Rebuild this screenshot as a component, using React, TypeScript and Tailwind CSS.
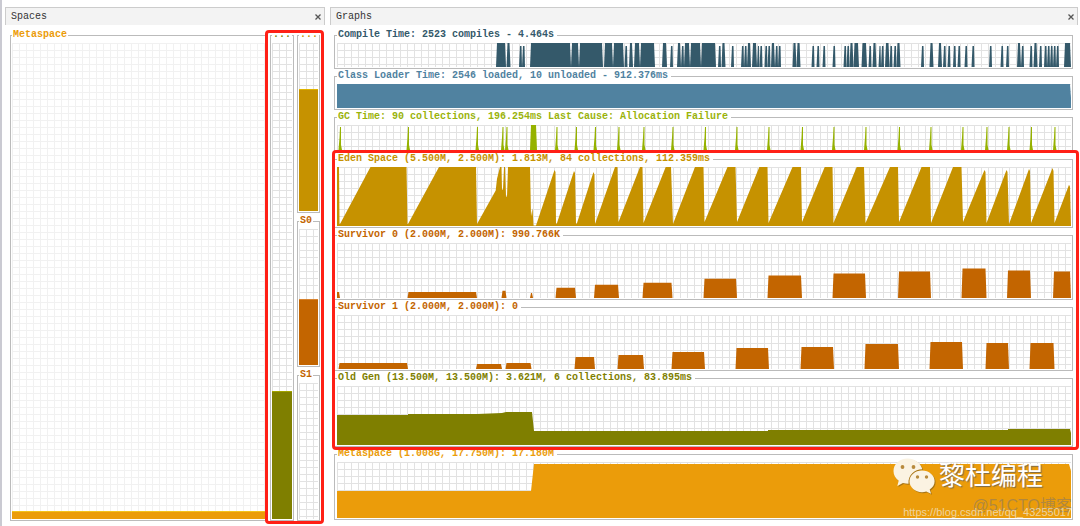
import { clsx } from "clsx"

type Point = [x: number, y: number]

type Shape = Point[]

type Graph = {
  id: string
  title: string
  textClass: string
  fillClass: string
  weight: number
  height: number
  shapes: Shape[]
}

type Gauge = {
  id: string
  label: string
  textClass: string
  fillClass: string
  weight: number
  percent: number
}

const PLOT_WIDTH = 734

// Vertical border and padding of a panel, which flex-grow does not share out
const PANEL_CHROME = 5

// Narrow samples never reach the top of the plot, wide ones do
const burst = ([left, right]: Point): Shape => {
  if (right - left < 3.3) {
    return [[left, 24], [left + 1, 3], [right - 0.5, 3], [right, 24]]
  }
  return [[left, 24], [left + 1, 0], [right - 1, 0], [right, 24]]
}

const spike = (x: number): Shape => [
  [x - 1.5, 24],
  [x - 0.5, 12],
  [x, 2],
  [x + 1, 2],
  [x + 1, 19],
  [x + 2, 24],
]

const block = ([left, right, top]: [number, number, number]): Shape => [
  [left, 54],
  [left + 1, top],
  [right - 1, top],
  [right, 54],
]

const compileBursts: Point[] = [
  [159, 169], [169.5, 173.5], [182, 185], [185, 188], [193, 234], [234, 242],
  [242, 266], [267, 276], [276, 287], [287.5, 290.5], [292, 296], [297, 303],
  [303, 318], [325, 330], [333, 336], [340, 344], [344, 347], [347, 353],
  [353, 364], [364, 379], [381, 384], [384.5, 388.5], [394, 397], [404, 407],
  [407, 410], [410, 414], [415, 420], [420, 422.5], [422.5, 425.5], [427.5, 430.5],
  [430.5, 433.5], [434, 438], [438, 441], [441, 444], [455.5, 459.5], [459.5, 463.5],
  [474.5, 477.5], [479.5, 482.5], [485.5, 488.5], [495.5, 498.5], [506.5, 509.5], [509.5, 512.5],
  [512.5, 516.5], [516.5, 522], [524.5, 530], [531.5, 534.5], [535.5, 539.5], [541.5, 544],
  [544, 547], [548, 552.5], [552.5, 555.5], [556.5, 559.5], [559.5, 563.5], [584, 587],
  [592.5, 596.5], [601, 605], [606, 609], [610.5, 613.5], [616, 619], [620.5, 623.5],
  [627.5, 630.5], [634.5, 637.5], [652, 655], [663.5, 666.5], [669, 672], [680, 684],
  [684, 687], [692.5, 695.5], [696.5, 700.5], [702, 705], [707, 710], [710, 713],
  [713, 716], [716, 719], [719, 722], [727, 734],
]

const gcSpikes = [
  3, 71, 140, 165.5, 169.5, 219.5, 239, 258, 281.5, 306.5, 335.5, 368, 399.5,
  431.5, 465, 496.5, 528.5, 562, 593.5, 625.5, 649.5, 671.5, 694, 717.5,
]

const eden: Shape = [
  [0, 60], [0, 0], [2, 0], [2.5, 58], [3, 58], [33.5, 0], [69.5, 0], [70.5, 58],
  [71, 58], [102, 0], [139, 0], [140, 58], [158.7, 24], [160, 12], [163, 0], [164.5, 0],
  [165, 23], [166, 23], [167, 0], [168, 0], [169, 30], [170, 30], [171, 0], [193, 0],
  [194, 50], [195.5, 42], [196.5, 59.5], [199, 59.5], [217.5, 3], [218.5, 5], [219, 58],
  [220, 57], [237, 4], [238, 6], [239, 58], [240, 57], [256.5, 5], [257.5, 8], [258, 58],
  [278, 0], [280.5, 0], [281.5, 56], [303, 0], [305.5, 0], [306.5, 57], [328.7, 0],
  [334, 0], [336, 58], [358, 0], [366.5, 0], [367.5, 56], [390.5, 0], [398.5, 0],
  [400, 56], [422.3, 0], [430.5, 0], [431.5, 57], [455.5, 0], [464, 0], [465, 56],
  [487.7, 0], [495.5, 0], [496.5, 57], [519.7, 0], [527, 0], [528.5, 57], [553, 0],
  [561, 0], [562, 56], [584.5, 0], [593, 0], [594, 57], [616, 0], [624.5, 0], [626, 56],
  [647.5, 3], [648.5, 5], [649.5, 57], [669.5, 3], [670.5, 5], [672, 58], [692, 2],
  [693, 4], [694, 57], [715.5, 1], [716.5, 4], [717.5, 57], [732, 18], [733, 20],
  [734, 60],
]

const survivor0: [number, number, number][] = [
  [-2, 3, 48], [70.5, 140, 48], [164.5, 169.5, 47], [193, 196, 49], [218.5, 239, 44],
  [257, 282, 41], [305.5, 335.5, 39], [366.5, 400, 35], [430.5, 465, 32], [495.5, 529, 30],
  [561, 594, 28], [624.5, 649.5, 25], [670, 694, 27], [716, 734, 28],
]

const survivor1: [number, number, number][] = [
  [1.5, 71, 48], [139, 165, 49], [168.5, 194.5, 48], [237.5, 258, 42], [280.5, 307, 40],
  [334.5, 368, 37], [398.5, 432, 33], [463.5, 497, 32], [527.5, 562, 29], [592.5, 626, 27],
  [648.5, 672, 28], [692.5, 717.5, 28],
]

const timeGraphs: Graph[] = [
  {
    id: "compile",
    title: "Compile Time: 2523 compiles - 4.464s",
    textClass: "text-[#34596a]",
    fillClass: "fill-[#34596a]",
    weight: 40,
    height: 24,
    shapes: compileBursts.map(burst),
  },
  {
    id: "class-loader",
    title: "Class Loader Time: 2546 loaded, 10 unloaded - 912.376ms",
    textClass: "text-[#5082a0]",
    fillClass: "fill-[#5082a0]",
    weight: 40,
    height: 24,
    shapes: [[[0, 24], [0, 0], [733, 0], [734, 14], [734, 24]]],
  },
  {
    id: "gc",
    title: "GC Time: 90 collections, 196.254ms Last Cause: Allocation Failure",
    textClass: "text-[#9ab30a]",
    fillClass: "fill-[#96b200]",
    weight: 41,
    height: 24,
    shapes: [
      ...gcSpikes.map(spike),
      [[193, 24], [194, 0], [199, 0], [200, 24]],
    ],
  },
]

const heapGraphs: Graph[] = [
  {
    id: "eden",
    title: "Eden Space (5.500M, 2.500M): 1.813M, 84 collections, 112.359ms",
    textClass: "text-[#c69200]",
    fillClass: "fill-[#c69200]",
    weight: 75,
    height: 60,
    shapes: [eden],
  },
  {
    id: "survivor-0",
    title: "Survivor 0 (2.000M, 2.000M): 990.766K",
    textClass: "text-[#c36500]",
    fillClass: "fill-[#c36500]",
    weight: 71,
    height: 54,
    shapes: survivor0.map(block),
  },
  {
    id: "survivor-1",
    title: "Survivor 1 (2.000M, 2.000M): 0",
    textClass: "text-[#c36500]",
    fillClass: "fill-[#c36500]",
    weight: 70,
    height: 54,
    shapes: survivor1.map(block),
  },
  {
    id: "old-gen",
    title: "Old Gen (13.500M, 13.500M): 3.621M, 6 collections, 83.895ms",
    textClass: "text-[#7f7f00]",
    fillClass: "fill-[#7f7f00]",
    weight: 75,
    height: 59,
    shapes: [
      [
        [0, 59], [0, 29], [71, 29], [71, 28], [140, 28], [165, 27], [169, 26],
        [195, 26], [197, 45], [431, 45], [431, 44], [671, 44], [671, 43],
        [733, 43], [734, 47], [734, 59],
      ],
    ],
  },
]

const metaspaceGraph: Graph = {
  id: "metaspace",
  title: "Metaspace (1.008G, 17.750M): 17.180M",
  textClass: "text-[#eb9c0a]",
  fillClass: "fill-[#eb9c0a]",
  weight: 72,
  height: 56,
  shapes: [
    [[0, 56], [0, 29], [194, 29], [197, 2], [732, 2], [734, 9], [734, 56]],
  ],
}

const metaspaceGauge: Gauge = {
  id: "metaspace",
  label: "Metaspace",
  textClass: "text-[#eb9c0a]",
  fillClass: "border-[#f3c31c] bg-[#eb9c0a]",
  weight: 492,
  percent: 1.7,
}

const oldGauge: Gauge = {
  id: "old",
  label: "...",
  textClass: "text-[#7f7f00]",
  fillClass: "border-[#a3a300] bg-[#7f7f00]",
  weight: 492,
  percent: 26.8,
}

const youngGauges: Gauge[] = [
  {
    id: "eden",
    label: "...",
    textClass: "text-[#c69200]",
    fillClass: "border-[#e0b400] bg-[#c69200]",
    weight: 184,
    percent: 72.5,
  },
  {
    id: "s0",
    label: "S0",
    textClass: "text-[#c36500]",
    fillClass: "border-[#d88430] bg-[#c36500]",
    weight: 152,
    percent: 48.5,
  },
  {
    id: "s1",
    label: "S1",
    textClass: "text-[#c36500]",
    fillClass: "bg-[#c36500]",
    weight: 152,
    percent: 0,
  },
]

const gridClass =
  "bg-[linear-gradient(#e2e2e2_1px,transparent_1px),linear-gradient(90deg,#e2e2e2_1px,transparent_1px)] bg-[length:7px_7px]"
const faintGridClass =
  "bg-[linear-gradient(#f1f1f1_1px,transparent_1px),linear-gradient(90deg,#f1f1f1_1px,transparent_1px)] bg-[length:7px_7px]"

const PanelHeader = ({ title }: { title: string }) => (
  <header className="flex h-[18px] shrink-0 items-center justify-between border-x border-t border-[#cccccc] bg-[#f3f3f3] pr-0.5 pl-[5px]">
    <h2 className="text-[10px] leading-4 text-[#333333]">{title}</h2>
    <button type="button" aria-label={`Close ${title}`} className="p-px">
      <svg viewBox="0 0 6 6" className="size-1.5 stroke-[#555555] stroke-[1.3]">
        <path d="M0.5 0.5 5.5 5.5M5.5 0.5 0.5 5.5" />
      </svg>
    </button>
  </header>
)

const GraphPanel = ({ graph }: { graph: Graph }) => (
  <fieldset
    className="flex min-h-0 min-w-0 basis-0 flex-col border border-[#bbbbbb] pt-0.5 pr-px pb-px pl-0.5"
    style={{ flexGrow: graph.weight - PANEL_CHROME }}
  >
    <legend
      className={clsx(
        "pr-[3px] pl-px text-[10px] leading-3 font-bold whitespace-nowrap",
        graph.textClass,
      )}
    >
      {graph.title}
    </legend>
    <svg
      viewBox={`0 0 ${PLOT_WIDTH} ${graph.height}`}
      preserveAspectRatio="none"
      className={clsx("min-h-0 w-full flex-1", gridClass, graph.fillClass)}
      aria-hidden="true"
    >
      {graph.shapes.map((shape, index) => (
        <polygon key={index} points={shape.map((p) => p.join(",")).join(" ")} />
      ))}
    </svg>
  </fieldset>
)

const GaugePanel = ({ gauge, faint }: { gauge: Gauge; faint?: boolean }) => (
  <fieldset
    className="flex min-h-0 w-full min-w-0 basis-0 flex-col border border-[#bbbbbb] px-px pt-0.5 pb-px"
    style={{ flexGrow: gauge.weight - PANEL_CHROME }}
  >
    <legend
      className={clsx(
        "px-px text-[10px] leading-3 font-bold",
        gauge.textClass,
      )}
    >
      {gauge.label}
    </legend>
    <div
      className={clsx(
        "flex min-h-0 flex-1 items-end",
        faint ? faintGridClass : gridClass,
      )}
    >
      {gauge.percent > 0 ? (
        <div
          className={clsx("w-full border-t", gauge.fillClass)}
          style={{ height: `${gauge.percent}%` }}
        />
      ) : null}
    </div>
  </fieldset>
)

const WeChatLogo = () => (
  <svg
    viewBox="0 0 42 36"
    className="h-9 w-[42px] drop-shadow-[1px_1px_0_rgba(120,90,30,0.6)]"
    aria-hidden="true"
  >
    <path
      fill="#fbf3e2"
      d="M14.5 0.5C6.7 0.5 0.5 6 0.5 13c0 4 2 7.4 5.2 9.700L4.300 28l5.600-3c1.800.6 3.600.8 5.600.8C15 17 21.500 11.300 29.300 11.300 27.800 5 21.700 0.500 14.500 0.500Z"
    />
    <path
      fill="#fbf3e2"
      d="M29 12.500c-7 0-12.500 4.800-12.500 10.800S22 34.200 29 34.200c1.500 0 2.900-.3 4.200-.6l4.900 2.200-1.400-4.200c3-2 4.900-5 4.900-8.300 0-6-5.600-10.800-12.600-10.800Z"
    />
    <g fill="#b88a3c">
      <circle cx="9.500" cy="9" r="1.900" />
      <circle cx="20.500" cy="9" r="1.900" />
      <circle cx="24.500" cy="19" r="1.700" />
      <circle cx="33.500" cy="19" r="1.700" />
    </g>
  </svg>
)

const Watermark = () => (
  <div className="pointer-events-none absolute right-2 bottom-0 h-[68px] w-[179px] font-['Liberation_Sans','Noto_Sans_CJK_SC',sans-serif]">
    <div className="flex items-center gap-1">
      <WeChatLogo />
      <span className="text-[26px] leading-9 whitespace-nowrap text-white [text-shadow:1px_1px_1px_#7a6a4a]">
        黎杜编程
      </span>
    </div>
    <span className="absolute right-0 bottom-2.5 text-[16px] leading-5 whitespace-nowrap text-[#8a7a60]/60">
      @51CTO博客
    </span>
    <span className="absolute right-0 bottom-2 text-[11px] leading-3 whitespace-nowrap text-[#f0e2c4]/80">
      https://blog.csdn.net/qq_43255017
    </span>
  </div>
)

export default function App() {
  return (
    <main className="relative grid h-screen min-h-[480px] grid-cols-[320fr_748fr] gap-[5px] overflow-hidden border-l-2 border-[#cacad2] bg-white pt-[7px] pr-0.5 pl-[3px] font-['Liberation_Mono',monospace]">
      <section className="flex min-h-0 min-w-0 flex-col">
        <PanelHeader title="Spaces" />
        <div className="flex min-h-0 flex-1 gap-[3px] px-[5px] pt-1 pb-[5px]">
          <div className="flex min-w-0 flex-1 flex-col">
            <GaugePanel gauge={metaspaceGauge} faint />
          </div>
          <div className="relative flex gap-[3px]">
            <div className="flex w-6 flex-col">
              <GaugePanel gauge={oldGauge} />
            </div>
            <div className="flex w-[23px] flex-col gap-0.5">
              {youngGauges.map((gauge) => (
                <GaugePanel key={gauge.id} gauge={gauge} />
              ))}
            </div>
            <div className="pointer-events-none absolute top-px -right-1 -bottom-[3px] -left-[5px] rounded-sm border-3 border-[#ff2016]" />
          </div>
        </div>
      </section>

      <section className="flex min-h-0 min-w-0 flex-col">
        <PanelHeader title="Graphs" />
        <div className="flex min-h-0 flex-1 flex-col gap-px pt-1 pr-[5px] pb-1.5 pl-1">
          {timeGraphs.map((graph) => (
            <GraphPanel key={graph.id} graph={graph} />
          ))}
          <div
            className="relative flex min-h-0 basis-0 flex-col gap-px"
            style={{
              flexGrow: heapGraphs.reduce((sum, graph) => sum + graph.weight, 3),
            }}
          >
            {heapGraphs.map((graph) => (
              <GraphPanel key={graph.id} graph={graph} />
            ))}
            <div className="pointer-events-none absolute -top-[3px] -right-1.5 -bottom-[3px] -left-0.5 rounded-sm border-3 border-[#ff2016]" />
          </div>
          <GraphPanel graph={metaspaceGraph} />
        </div>
      </section>

      <Watermark />
    </main>
  )
}
